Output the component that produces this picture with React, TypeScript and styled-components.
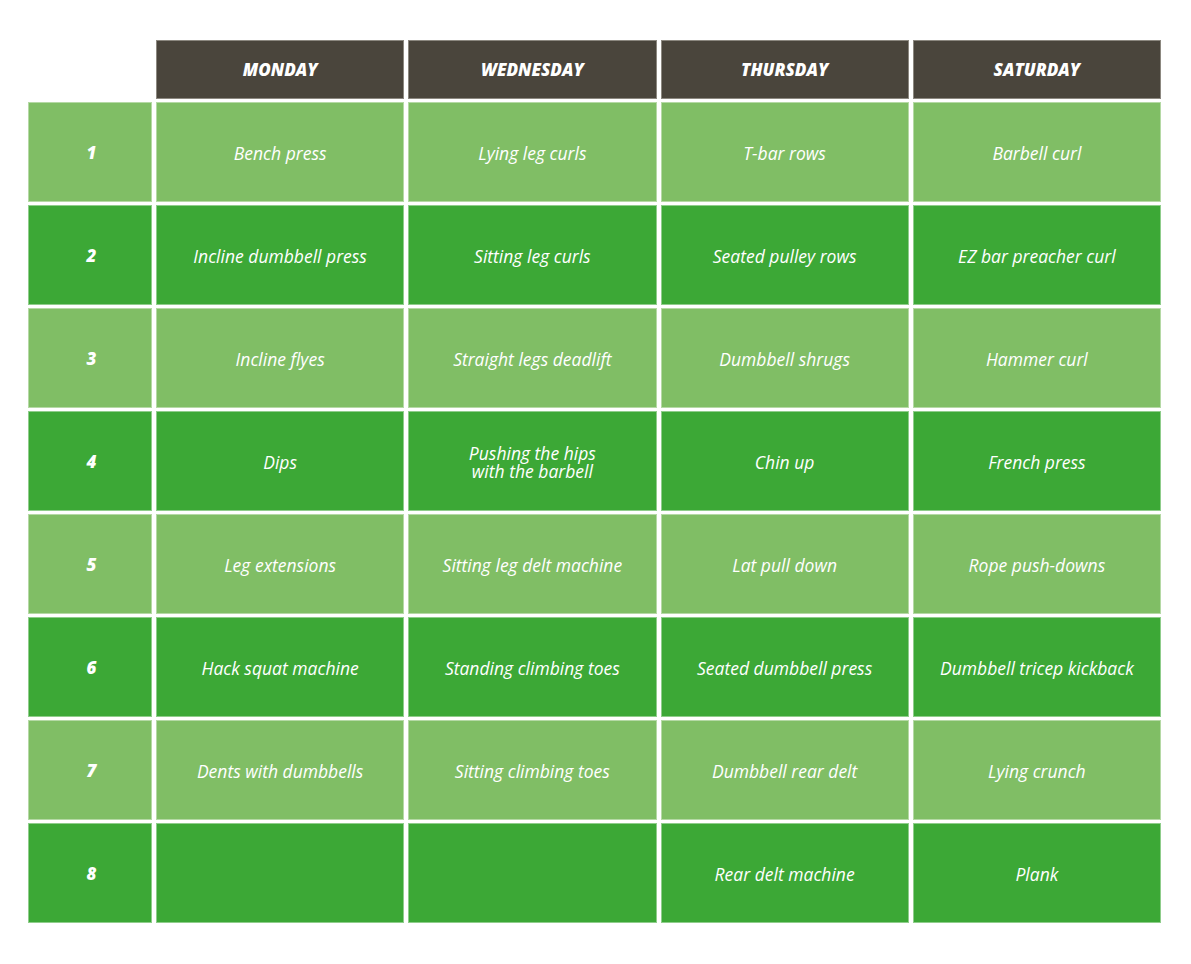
import styled, { createGlobalStyle } from "styled-components";

const GlobalStyle = createGlobalStyle`
  html, body {
    margin: 0;
    background: #ffffff;
    font-family: "Open Sans", "Liberation Sans", sans-serif;
  }
`;

const days = ["Monday", "Wednesday", "Thursday", "Saturday"];

const plan: string[][] = [
  ["Bench press", "Lying leg curls", "T-bar rows", "Barbell curl"],
  ["Incline dumbbell press", "Sitting leg curls", "Seated pulley rows", "EZ bar preacher curl"],
  ["Incline flyes", "Straight legs deadlift", "Dumbbell shrugs", "Hammer curl"],
  ["Dips", "Pushing the hips\nwith the barbell", "Chin up", "French press"],
  ["Leg extensions", "Sitting leg delt machine", "Lat pull down", "Rope push-downs"],
  ["Hack squat machine", "Standing climbing toes", "Seated dumbbell press", "Dumbbell tricep kickback"],
  ["Dents with dumbbells", "Sitting climbing toes", "Dumbbell rear delt", "Lying crunch"],
  ["", "", "Rear delt machine", "Plank"],
];

export default function App() {
  return (
    <>
      <GlobalStyle />
      <Page>
        <Schedule>
          <Corner />
          {days.map((day) => (
            <DayHeader key={day}>{day}</DayHeader>
          ))}
          {plan.map((row, i) => {
            const dark = i % 2 === 1;
            return [
              <NumberCell key={`n${i}`} $dark={dark}>
                {i + 1}
              </NumberCell>,
              ...row.map((exercise, j) => (
                <Cell key={`c${i}-${j}`} $dark={dark}>
                  {exercise}
                </Cell>
              )),
            ];
          })}
        </Schedule>
      </Page>
    </>
  );
}

const Page = styled.div`
  padding: 40px 0 0 28px;
`;

const Schedule = styled.div`
  display: grid;
  grid-template-columns: 124px repeat(4, 1fr);
  grid-template-rows: 59px repeat(8, 100px);
  column-gap: 4px;
  row-gap: 3px;
  width: 1133px;
`;

const Corner = styled.div``;

const DayHeader = styled.div`
  display: flex;
  align-items: center;
  justify-content: center;
  background: #4a453c;
  color: #ffffff;
  font-weight: 800;
  font-style: italic;
  font-size: 17px;
  letter-spacing: 0;
  text-transform: uppercase;
  box-shadow: inset 0 0 0 1px #8c8880;
`;

const Cell = styled.div<{ $dark: boolean }>`
  display: flex;
  align-items: center;
  justify-content: center;
  text-align: center;
  white-space: pre-line;
  background: ${({ $dark }) => ($dark ? "#3ca836" : "#80be65")};
  box-shadow: inset 0 0 0 1px ${({ $dark }) => ($dark ? "#8fcd8b" : "#b5d9a5")};
  color: #ffffff;
  font-style: italic;
  font-size: 17.5px;
  line-height: 18px;
  letter-spacing: 0;
  padding-top: 2px;
`;

const NumberCell = styled(Cell)`
  font-weight: 800;
  font-size: 17px;
  padding-left: 3px;
`;
